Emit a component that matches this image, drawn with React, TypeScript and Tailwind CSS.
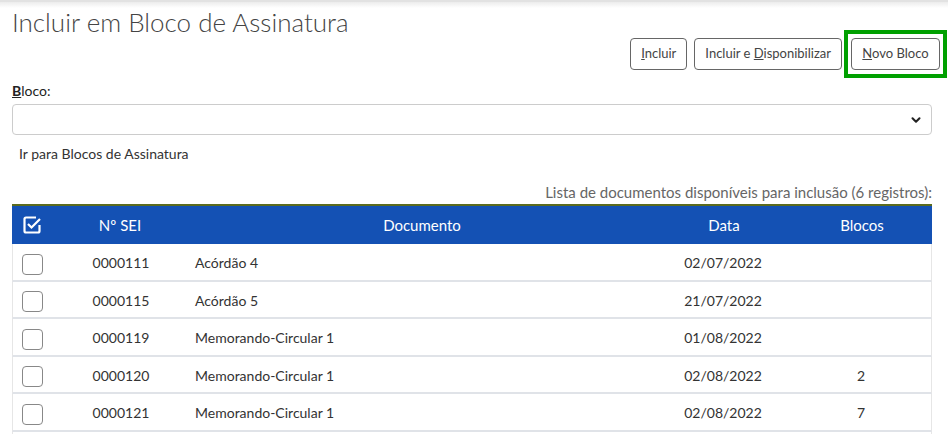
import { ChevronDown } from 'lucide-react'

const rows = [
  { sei: '0000111', doc: 'Acórdão 4', data: '02/07/2022', blocos: '' },
  { sei: '0000115', doc: 'Acórdão 5', data: '21/07/2022', blocos: '' },
  { sei: '0000119', doc: 'Memorando-Circular 1', data: '01/08/2022', blocos: '' },
  { sei: '0000120', doc: 'Memorando-Circular 1', data: '02/08/2022', blocos: '2' },
  { sei: '0000121', doc: 'Memorando-Circular 1', data: '02/08/2022', blocos: '7' },
]

function CheckedIcon() {
  return (
    <svg width="20" height="20" viewBox="0 0 20 20" fill="none" stroke="white" strokeWidth="2.2">
      <path d="M14 2.5H4a1.5 1.5 0 0 0-1.5 1.5v12A1.5 1.5 0 0 0 4 17.5h12a1.5 1.5 0 0 0 1.5-1.5V10" />
      <path d="M6 9l3.5 3.5L18 4" />
    </svg>
  )
}

const cols = 'grid grid-cols-[48px_120px_1fr_120px_148px] items-center'

export default function App() {
  return (
    <div className="w-[948px] h-[434px] overflow-hidden bg-white text-[#333] font-['Lato',sans-serif]">
      <div className="h-[8px] border-t-2 border-[#e2e2e2] bg-gradient-to-b from-[#ececec] to-white" />

      <div className="px-3">
        <h1 className="text-[26px] leading-[30px] font-light text-[#444] -mt-[1px]">
          Incluir em Bloco de Assinatura
        </h1>

        <div className="flex justify-end items-center mt-[1px] -mr-[11px]">
          <button className="h-[32px] px-[10px] border border-[#666] rounded-[4px] text-[13px] text-[#444]">
            <u>I</u>ncluir
          </button>
          <button className="ml-[7px] h-[32px] px-[10px] border border-[#666] rounded-[4px] text-[13px] text-[#444]">
            Incluir e <u>D</u>isponibilizar
          </button>
          <div className="ml-[2px] -my-[8px] border-[4px] border-[#00a000] px-[3px] py-[4px]">
            <button className="block h-[32px] w-[89px] border border-[#666] rounded-[4px] text-[13px] text-[#444]">
              <u>N</u>ovo Bloco
            </button>
          </div>
        </div>

        <div className="w-[920px]">
          <div className="mt-[12px] text-[14px] leading-[18px] text-[#222]">
            <u className="font-bold">B</u>loco:
          </div>
          <div className="mt-[4px] h-[31px] border border-[#ccc] rounded-[4px] flex items-center justify-end pr-[8px]">
            <ChevronDown size={14} strokeWidth={3.5} className="text-[#222]" />
          </div>
          <div className="mt-[10px] pl-[7px] text-[14px] leading-[18px] text-[#333]">
            Ir para Blocos de Assinatura
          </div>

          <div className="mt-[20px] text-right text-[15px] leading-[18px] text-[#666]">
            Lista de documentos disponíveis para inclusão (6 registros):
          </div>

          <div className="mt-[3px] border-t-2 border-[#5b6b1e]">
            <div className={`${cols} h-[38px] bg-[#1451b4] text-white text-[15px]`}>
              <div className="pl-[10px] flex items-center"><CheckedIcon /></div>
              <div className="text-center">Nº SEI</div>
              <div className="text-center">Documento</div>
              <div className="text-center">Data</div>
              <div className="text-center pl-[8px]">Blocos</div>
            </div>
            {rows.map((r) => (
              <div
                key={r.sei}
                className={`${cols} h-[37.5px] pt-[2px] border-b-2 border-[#e0e3e8] border-l border-l-[#e6e6e6] border-r border-r-[#e6e6e6] text-[14px] text-[#333]`}
              >
                <div className="pl-[9px] pt-[3px]">
                  <div className="w-[21px] h-[21px] border border-[#888] rounded-[4px] bg-white" />
                </div>
                <div className="text-center">{r.sei}</div>
                <div className="pl-[14px]">{r.doc}</div>
                <div className="text-center">{r.data}</div>
                <div className="text-center pl-[8px]">{r.blocos}</div>
              </div>
            ))}
            <div className="h-[20px] border-l border-l-[#e6e6e6] border-r border-r-[#e6e6e6]" />
          </div>
        </div>
      </div>
    </div>
  )
}
